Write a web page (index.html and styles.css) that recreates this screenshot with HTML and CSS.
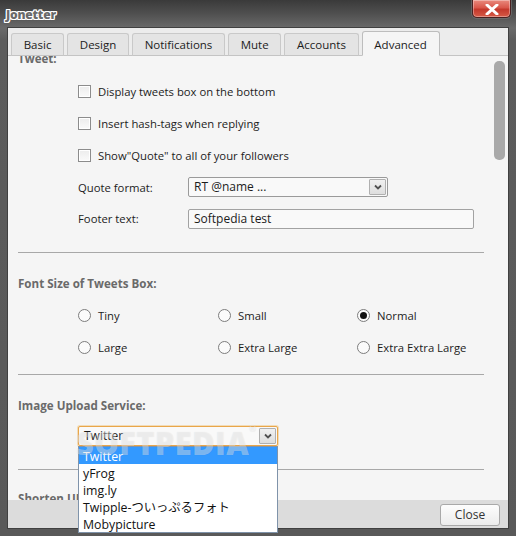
FILE: index.html
```html
<!DOCTYPE html>
<html>
<head>
<meta charset="utf-8">
<link rel="stylesheet" href="styles.css">
</head>
<body>
<div class="window">
  <div class="titlebar">
    <span class="title">Jonetter</span>
    <div class="close-x">
      <svg width="14" height="11" viewBox="0 0 14 11"><path d="M2 1 L12 10 M12 1 L2 10" stroke="#fff" stroke-width="3" stroke-linecap="round"/></svg>
    </div>
  </div>
  <div class="client">
    <div class="tabs">
      <div class="tab">Basic</div>
      <div class="tab">Design</div>
      <div class="tab">Notifications</div>
      <div class="tab">Mute</div>
      <div class="tab">Accounts</div>
      <div class="tab active">Advanced</div>
    </div>
    <div class="panel">
      <div class="scroll">
        <div class="content">
          <div class="header first">Tweet:</div>
          <div class="check-row"><span class="checkbox"></span><span>Display tweets box on the bottom</span></div>
          <div class="check-row"><span class="checkbox"></span><span>Insert hash-tags when replying</span></div>
          <div class="check-row"><span class="checkbox"></span><span>Show"Quote" to all of your followers</span></div>
          <div class="field-row quote">
            <span class="field-label">Quote format:</span>
            <div class="select quote-select"><span class="select-text">RT @name ...</span><span class="arrow"><svg width="8" height="6" viewBox="0 0 8 6"><path d="M1 1.5 L4 4.5 L7 1.5" fill="none" stroke="#505050" stroke-width="1.8"/></svg></span></div>
          </div>
          <div class="field-row footer-row">
            <span class="field-label">Footer text:</span>
            <div class="textbox">Softpedia test</div>
          </div>
          <div class="sep sep1"></div>
          <div class="header">Font Size of Tweets Box:</div>
          <div class="radio-grid">
            <div class="radio-row"><span class="radio"></span><span>Tiny</span></div>
            <div class="radio-row"><span class="radio"></span><span>Small</span></div>
            <div class="radio-row"><span class="radio checked"></span><span>Normal</span></div>
            <div class="radio-row"><span class="radio"></span><span>Large</span></div>
            <div class="radio-row"><span class="radio"></span><span>Extra Large</span></div>
            <div class="radio-row"><span class="radio"></span><span>Extra Extra Large</span></div>
          </div>
          <div class="sep sep2"></div>
          <div class="header">Image Upload Service:</div>
          <div class="upload-row">
            <div class="select focus upload-select"><span class="select-text">Twitter</span><span class="arrow"><svg width="8" height="6" viewBox="0 0 8 6"><path d="M1 1.5 L4 4.5 L7 1.5" fill="none" stroke="#505050" stroke-width="1.8"/></svg></span></div>
          </div>
          <div class="sep sep3"></div>
          <div class="header">Shorten URL Service:</div>
        </div>
      </div>
      <div class="scrollbar"><div class="thumb"></div></div>
    </div>
    <div class="footer">
      <div class="close-btn">Close</div>
    </div>
  </div>
  <ul class="dropdown">
    <li class="selected">Twitter</li>
    <li>yFrog</li>
    <li>img.ly</li>
    <li>Twipple-ついっぷるフォト</li>
    <li>Mobypicture</li>
  </ul>
  <div class="watermark">SOFTPEDIA<sup>®</sup></div>
</div>
</body>
</html>
```
FILE: styles.css
```css
* { box-sizing: border-box; }
html, body { margin: 0; padding: 0; }
body {
  width: 516px;
  height: 536px;
  overflow: hidden;
  font-family: "Open Sans", "Noto Sans", "Noto Sans CJK JP", sans-serif;
  font-size: 11.3px;
  color: #1c1c1c;
  background: #5a5a5a;
}
.window {
  position: relative;
  width: 516px;
  height: 536px;
  display: flex;
  flex-direction: column;
  background: linear-gradient(#3a3a3a 0, #505050 14px, #6a6a6a 28px, #5c5c5c 40px, #595959 100%);
}
.titlebar {
  height: 28px;
  flex: none;
  display: flex;
  justify-content: space-between;
  align-items: flex-start;
}
.title {
  margin: 6px 0 0 6px;
  font-family: "Open Sans", sans-serif;
  font-weight: 800;
  font-size: 12px;
  letter-spacing: -0.2px;
  color: #6a6a6a;
  text-shadow: 1px 0 0 #fff, -1px 0 0 #fff, 0 1px 0 #fff, 0 -1px 0 #fff,
    1px 1px 0 #fff, -1px -1px 0 #fff, 1px -1px 0 #fff, -1px 1px 0 #fff,
    0 0 2px #222;
}
.close-x {
  width: 39px;
  height: 18px;
  margin-right: 5px;
  border: 1px solid #4a2020;
  border-top: none;
  border-radius: 0 0 5px 5px;
  background: linear-gradient(#e98a7e 0, #d9574b 45%, #c4382c 55%, #d65a46 100%);
  box-shadow: inset 0 0 0 1px rgba(255,255,255,0.35), 0 0 0 1px rgba(120,120,120,0.6);
  display: flex;
  align-items: center;
  justify-content: center;
}
.close-x svg { display: block; margin-top: 1px; }
.client {
  margin: 0 8px;
  height: 500px;
  flex: none;
  display: flex;
  flex-direction: column;
  background: #ececec;
  box-shadow: 0 0 0 1px #404040;
}
.tabs {
  height: 28px;
  flex: none;
  display: flex;
  align-items: flex-end;
  gap: 3px;
  padding-left: 3px;
  border-bottom: 1px solid #c4c4c4;
  background: #ececec;
}
.tab {
  height: 23px;
  padding: 0 11.7px;
  margin-bottom: -1px;
  border: 1px solid #c9c9c9;
  border-bottom-color: #c4c4c4;
  border-radius: 3px 3px 0 0;
  background: #e4e4e4;
  line-height: 22px;
  font-size: 11.5px;
  color: #1c1c1c;
}
.tab.active {
  height: 25px;
  background: #f5f5f5;
  border-color: #bdbdbd;
  border-bottom-color: #f5f5f5;
  line-height: 26px;
}
.panel {
  flex: 1;
  display: flex;
  background: #f5f5f5;
  overflow: hidden;
}
.scroll {
  flex: 1;
  overflow: hidden;
}
.content {
  margin-top: -5px;
  padding-left: 10px;
  width: 476px;
}
.header {
  height: 16px;
  line-height: 16px;
  font-weight: 700;
  color: #6a6a6a;
  font-size: 11.6px;
}
.check-row {
  height: 32px;
  display: flex;
  align-items: center;
  gap: 7px;
  padding-left: 60px;
}
.header.first + .check-row { margin-top: 8px; }
.checkbox {
  width: 13px;
  height: 13px;
  border: 1px solid #8c8c8c;
  background: linear-gradient(#ececec, #fafafa);
  box-shadow: inset 0 0 0 1px #fff;
  flex: none;
}
.field-row {
  display: flex;
  align-items: center;
  padding-left: 60px;
}
.field-row.quote { height: 32px; }
.field-row.footer-row { height: 31px; }
.field-label { width: 110px; flex: none; }
.select {
  height: 20px;
  display: flex;
  align-items: stretch;
  border: 1px solid #9a9a9a;
  border-radius: 2px;
  background: #f9f9f9;
}
.select-text {
  flex: 1;
  padding-left: 5px;
  line-height: 18px;
  font-size: 12px;
}
.arrow {
  width: 17px;
  margin: 1px 1px 1px 0;
  border: 1px solid #b0b0b0;
  border-radius: 1px;
  background: linear-gradient(#f0f0f0, #dedede);
  display: flex;
  align-items: center;
  justify-content: center;
}
.quote-select { width: 200px; }
.textbox {
  width: 286px;
  height: 20px;
  padding-left: 5px;
  border: 1px solid #a2a2a2;
  border-radius: 2px;
  background: #f9f9f9;
  line-height: 18px;
  font-size: 12px;
}
.sep {
  height: 1px;
  width: 466px;
  background: #a8a8a8;
}
.sep1 { margin: 18px 0 23px; }
.sep2 { margin: 11px 0 23px; }
.sep3 { margin: 23px 0 21px; }
.radio-grid {
  margin-top: 7px;
  padding-left: 60px;
  display: grid;
  grid-template-columns: 140px 139px 140px;
}
.radio-row {
  height: 32px;
  display: flex;
  align-items: center;
  gap: 7px;
}
.radio {
  width: 13px;
  height: 13px;
  border-radius: 50%;
  border: 1px solid #7d7d7d;
  background: #fbfbfb;
  flex: none;
  display: flex;
  align-items: center;
  justify-content: center;
}
.radio.checked::after {
  content: "";
  width: 7px;
  height: 7px;
  border-radius: 50%;
  background: #111;
}
.upload-row {
  margin-top: 12px;
  padding-left: 60px;
}
.upload-select {
  width: 200px;
  border-color: #e9a64a;
  box-shadow: 0 0 0 1px rgba(240,190,110,0.45);
}
.scrollbar {
  width: 15px;
  flex: none;
  padding: 5px 3px 0 1px;
}
.thumb {
  width: 11px;
  height: 99px;
  border-radius: 5px;
  background: #a9a9a9;
}
.footer {
  height: 28px;
  flex: none;
  background: #dcdcdc;
  display: flex;
  justify-content: flex-end;
  align-items: flex-start;
  padding: 4px 8px 0 0;
}
.close-btn {
  width: 60px;
  height: 22px;
  border: 1px solid #a9a9a9;
  border-radius: 3px;
  background: linear-gradient(#fdfdfd, #ececec);
  text-align: center;
  line-height: 20px;
  font-size: 12px;
  color: #333;
}
.watermark {
  position: absolute;
  left: 76px;
  top: 422px;
  font-family: "Open Sans", sans-serif;
  font-weight: 800;
  font-size: 31px;
  letter-spacing: 0.3px;
  color: rgba(255,255,255,0.4);
  text-shadow: 0 0 1px rgba(0,0,0,0.1);
  pointer-events: none;
  z-index: 3;
}
.watermark sup { font-size: 9px; vertical-align: top; }
.dropdown {
  position: absolute;
  left: 78px;
  top: 446px;
  width: 200px;
  margin: 0;
  padding: 0;
  list-style: none;
  background: #fff;
  border: 1px solid #7f93aa;
  z-index: 2;
}
.dropdown li {
  height: 17px;
  line-height: 19px;
  padding-left: 4px;
  font-size: 12.3px;
  color: #111;
  font-family: "Open Sans", "Noto Sans CJK JP", sans-serif;
}
.dropdown li.selected {
  background: #3399ff;
  color: #fff;
}
```
